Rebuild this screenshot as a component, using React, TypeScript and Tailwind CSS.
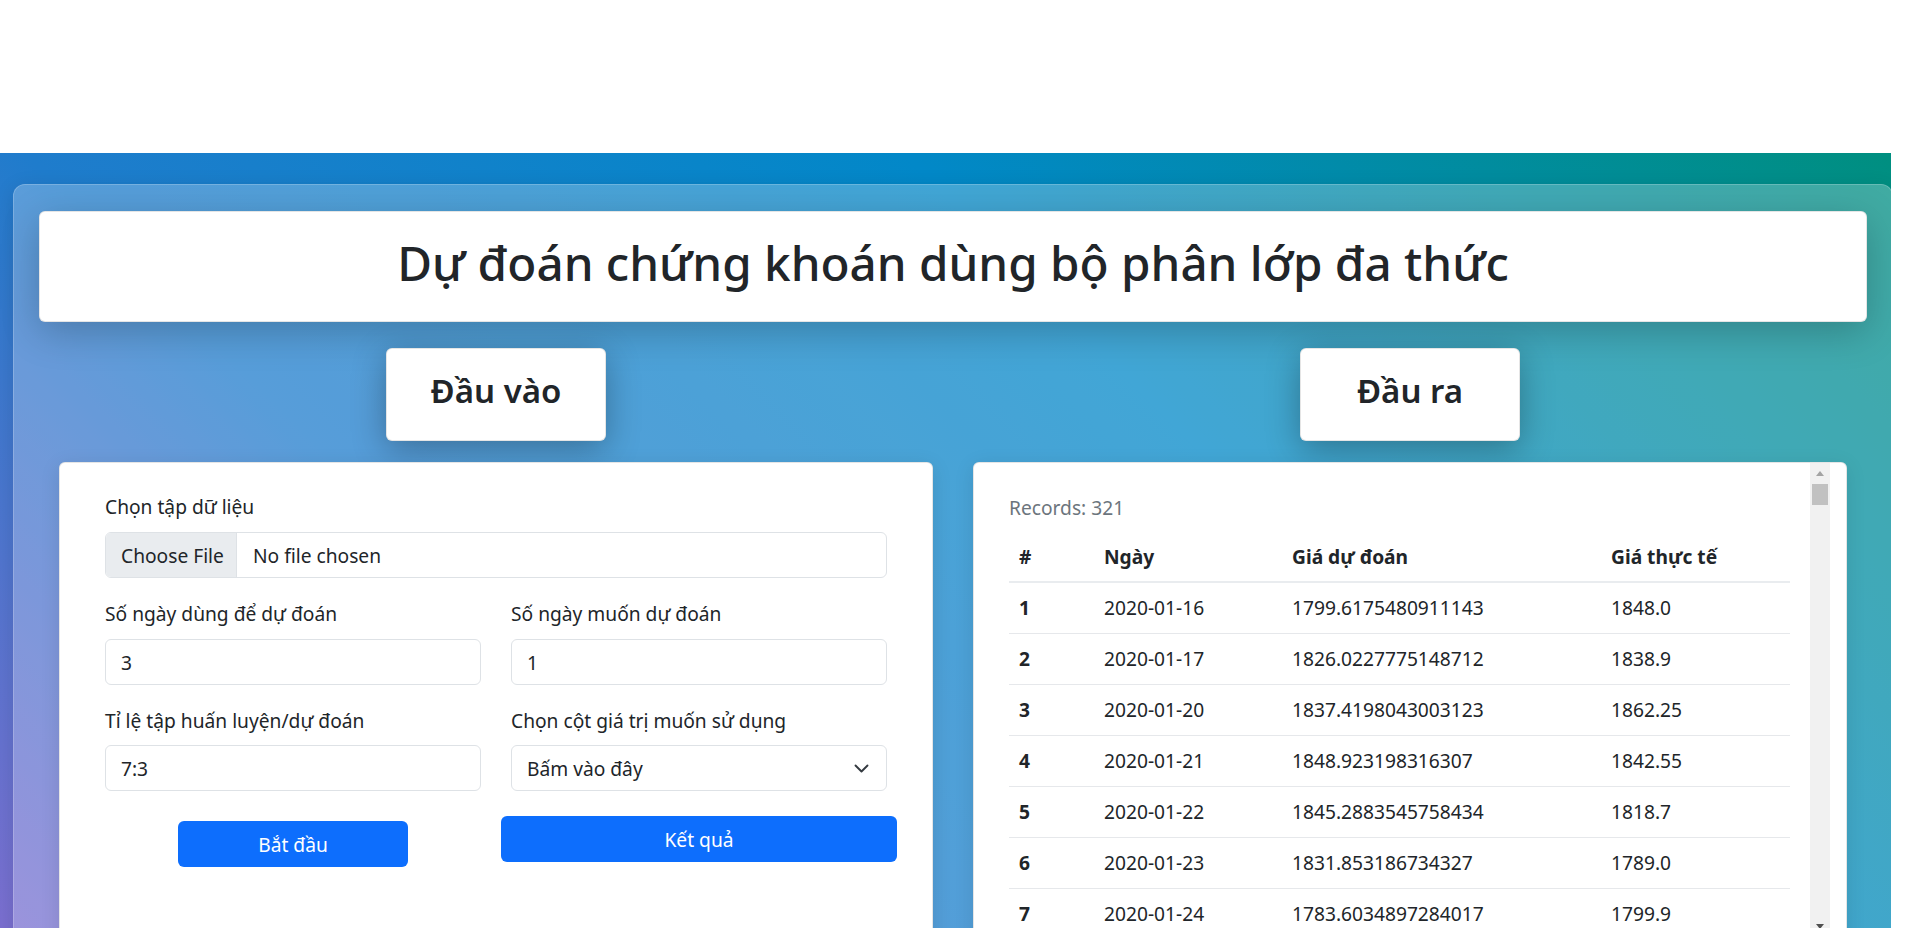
import React from "react";

const rows: string[][] = [
  ["1", "2020-01-16", "1799.6175480911143", "1848.0"],
  ["2", "2020-01-17", "1826.0227775148712", "1838.9"],
  ["3", "2020-01-20", "1837.4198043003123", "1862.25"],
  ["4", "2020-01-21", "1848.923198316307", "1842.55"],
  ["5", "2020-01-22", "1845.2883545758434", "1818.7"],
  ["6", "2020-01-23", "1831.853186734327", "1789.0"],
  ["7", "2020-01-24", "1783.6034897284017", "1799.9"],
];

function Label({ children }: { children: React.ReactNode }) {
  return <div className="h-[28.8px] leading-[28.8px] mb-[10px] whitespace-nowrap">{children}</div>;
}

function TextInput({ value }: { value: string }) {
  return (
    <div className="h-[46px] border border-[#dee2e6] rounded-[6px] bg-white flex items-center pl-[15px] pt-[3px]">
      {value}
    </div>
  );
}

function HeadBox({ children }: { children: React.ReactNode }) {
  return (
    <div className="w-[220px] h-[93px] mt-[26px] bg-white rounded-[6px] border border-black/10 shadow-[0_8px_34px_rgba(0,0,0,0.3)] flex items-center justify-center pb-[8px] text-[33px] font-semibold whitespace-nowrap">
      {children}
    </div>
  );
}

export default function App() {
  return (
    <div className="w-[1919px] h-[928px] overflow-hidden bg-white font-['Noto_Sans',sans-serif] text-[19.2px] text-[#212529]">
      <div className="h-[153px]" />
      <section className="w-[1891px] h-[775px] overflow-hidden pt-[31px] pl-[13px] bg-[linear-gradient(45deg,#7b6fd0_0%,#1f7ccc_30%,#0288c8_63%,#008f80_100%)]">
        <div className="w-[1880px] h-[820px] rounded-[12px] bg-white/25 border border-white/20 shadow-[0_4px_20px_rgba(0,0,0,0.12)] px-[25px] pt-[26px]">
          <div className="h-[111px] bg-white rounded-[6px] border border-black/10 shadow-[0_10px_38px_rgba(0,0,0,0.22)] flex items-center justify-center pb-[7px] text-[47.6px] font-medium whitespace-nowrap">
            Dự đoán chứng khoán dùng bộ phân lớp đa thức
          </div>
          <div className="grid grid-cols-2">
            {/* Left column */}
            <div className="flex flex-col items-center">
              <HeadBox>Đầu vào</HeadBox>
              <div className="mt-[21px] w-[874px] h-[520px] bg-white rounded-[6px] border border-black/10 shadow-[0_4px_20px_rgba(0,0,0,0.1)] pt-[30px] px-[45px]">
                <Label>Chọn tập dữ liệu</Label>
                <div className="flex h-[46px] border border-[#dee2e6] rounded-[6px] overflow-hidden">
                  <div className="w-[131px] bg-[#e9ecef] border-r border-[#dee2e6] flex items-center pl-[15px] pt-[3px] whitespace-nowrap">
                    Choose File
                  </div>
                  <div className="flex items-center pl-[16px] pt-[3px] whitespace-nowrap">No file chosen</div>
                </div>
                <div className="grid grid-cols-2 gap-x-[30px] gap-y-[22px] mt-[22px]">
                  <div>
                    <Label>Số ngày dùng để dự đoán</Label>
                    <TextInput value="3" />
                  </div>
                  <div>
                    <Label>Số ngày muốn dự đoán</Label>
                    <TextInput value="1" />
                  </div>
                  <div>
                    <Label>Tỉ lệ tập huấn luyện/dự đoán</Label>
                    <TextInput value="7:3" />
                  </div>
                  <div>
                    <Label>Chọn cột giá trị muốn sử dụng</Label>
                    <div className="h-[46px] border border-[#dee2e6] rounded-[6px] bg-white flex items-center justify-between pl-[15px] pr-[17px]">
                      <span className="pt-[3px]">Bấm vào đây</span>
                      <svg width="15" height="9" viewBox="0 0 15 9" fill="none">
                        <path d="M1.5 1.5 L7.5 7.5 L13.5 1.5" stroke="#343a40" strokeWidth="1.9" strokeLinecap="round" strokeLinejoin="round" />
                      </svg>
                    </div>
                  </div>
                </div>
                <div className="grid grid-cols-2 gap-x-[30px] mt-[25px]">
                  <div className="flex justify-center pt-[5px]">
                    <button className="w-[230px] h-[46px] shrink-0 rounded-[6px] bg-[#0d6efd] text-white pt-[3px]">Bắt đầu</button>
                  </div>
                  <div className="flex justify-center">
                    <button className="w-[396px] h-[46px] shrink-0 rounded-[6px] bg-[#0d6efd] text-white pt-[3px]">Kết quả</button>
                  </div>
                </div>
              </div>
            </div>
            {/* Right column */}
            <div className="flex flex-col items-center">
              <HeadBox>Đầu ra</HeadBox>
              <div className="mt-[21px] w-[874px] h-[520px] bg-white rounded-[6px] border border-black/10 shadow-[0_4px_20px_rgba(0,0,0,0.1)] flex items-start overflow-hidden">
                <div className="w-[836px] shrink-0 pl-[35px] pr-[20px] pt-[31px]">
                  <div className="h-[28.8px] leading-[28.8px] text-[#6c757d]">Records: 321</div>
                  <div className="mt-[12px] w-[781px]">
                    <div className="grid grid-cols-[85px_188px_319px_189px] h-[48px] items-center border-b-2 border-[#e9ecef] font-bold">
                      <div className="px-[10px]">#</div>
                      <div className="px-[10px]">Ngày</div>
                      <div className="px-[10px]">Giá dự đoán</div>
                      <div className="px-[10px]">Giá thực tế</div>
                    </div>
                    {rows.map((r) => (
                      <div key={r[0]} className="grid grid-cols-[85px_188px_319px_189px] h-[51px] items-center border-b border-[#e6e8eb] pt-[2px]">
                        <div className="px-[10px] font-bold">{r[0]}</div>
                        <div className="px-[10px]">{r[1]}</div>
                        <div className="px-[10px]">{r[2]}</div>
                        <div className="px-[10px]">{r[3]}</div>
                      </div>
                    ))}
                  </div>
                </div>
                <div className="w-[20px] h-[473px] shrink-0 bg-[#f1f1f1] flex flex-col">
                  <div className="h-[20px] flex items-center justify-center">
                    <svg width="8" height="5" viewBox="0 0 8 5"><path d="M0 5 L4 0 L8 5Z" fill="#a3a3a3" /></svg>
                  </div>
                  <div className="mx-[2px] mt-[1px] h-[21px] bg-[#c1c1c1]" />
                  <div className="flex-1" />
                  <div className="h-[20px] flex items-center justify-center">
                    <svg width="8" height="5" viewBox="0 0 8 5"><path d="M0 0 L8 0 L4 5Z" fill="#505050" /></svg>
                  </div>
                </div>
              </div>
            </div>
          </div>
        </div>
      </section>
    </div>
  );
}
